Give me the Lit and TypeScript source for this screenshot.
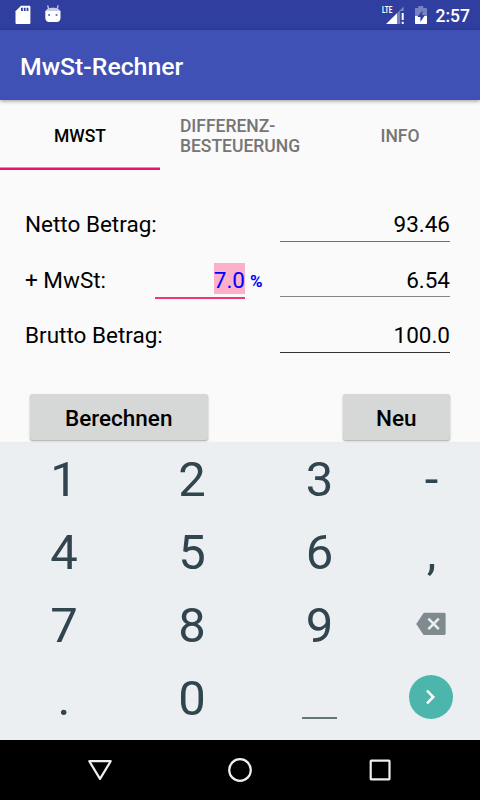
import { LitElement, html, css, svg } from "lit";
import { customElement } from "lit/decorators.js";

const sdCard = svg`<svg width="16" height="20" viewBox="0 0 16 20"><path fill="#fff" d="M6 .7h8.200c.8 0 1.200.5 1.200 1.200v15.900c0 .8-.4 1.200-1.200 1.200H1.700c-.8 0-1.200-.4-1.200-1.200V6.300z"/><path fill="#303f9f" d="M6 2.700h1.800v3.200H6zM8.800 2.700h1.800v3.200H8.800zM11.600 2.700h1.800v3.200h-1.800z"/></svg>`;

const robot = svg`<svg width="18" height="20" viewBox="0 0 18 20"><path d="M4.600 4 3.700.3M13.200 4 14.100.3" stroke="#c5cae9" stroke-width="1.300" fill="none"/><path fill="#c5cae9" d="M1.500 6.500C2 4 5 2.800 8.900 2.800S15.800 4 16.300 6.500z"/><path fill="#fff" d="M1.300 6h15.200v6.300c0 3.500-1.700 4.700-4.400 4.700H5.700c-2.700 0-4.400-1.200-4.400-4.700z"/><circle cx="5.100" cy="10" r="1.100" fill="#5c6bc0"/><circle cx="12.500" cy="10" r="1.100" fill="#5c6bc0"/></svg>`;

const signal = svg`<svg width="19" height="19" viewBox="0 0 19 19"><path fill="#7782c2" d="M17.700.5v4.500h-3.500v13H0z"/><path fill="#fff" d="M11 7.300V18H.2z"/><path fill="#fff" d="M15.700 7h2v7h-2zM15.700 15.800h2V18h-2z"/></svg>`;

const battery = svg`<svg width="14" height="20" viewBox="0 0 14 20"><path fill="#7782c2" d="M4.300 1h5v2H12c.6 0 1 .4 1 1v7.500H1V4c0-.6.4-1 1-1h2.300z"/><path fill="#fff" d="M1 11h12v7c0 .6-.4 1-1 1H2c-.6 0-1-.4-1-1z"/><path fill="#303f9f" d="M8.700 5.200 3.300 12h3.100v4.900L11 10H8z"/></svg>`;

const backspace = svg`<svg width="30" height="24" viewBox="0 0 30 24"><path fill="#808b90" d="M8.500.8h19.600c.9 0 1.500.6 1.500 1.500v19.300c0 .9-.6 1.500-1.500 1.500H8.500c-.6 0-1-.3-1.300-.7L.2 12l7-10.500c.3-.4.700-.7 1.300-.7z"/><path d="m12.400 6.700 10.400 10.400M22.800 6.700 12.400 17.100" stroke="#eceff1" stroke-width="2.500" fill="none"/></svg>`;

const chevron = svg`<svg width="12" height="16" viewBox="0 0 12 16"><path d="m2 1.700 6.300 6.300L2 14.300" stroke="#fff" stroke-width="2.500" fill="none"/></svg>`;

@customElement("app-root")
export class AppRoot extends LitElement {
  static styles = css`
    :host {
      display: flex;
      flex-direction: column;
      width: 480px;
      height: 800px;
      overflow: hidden;
      background: #fafafa;
      color: #000;
      font-family: Roboto, "Liberation Sans", sans-serif;
    }
    svg { display: block; flex: none; }
    .status {
      flex: none;
      display: flex;
      align-items: center;
      height: 30px;
      padding: 0 10px 0 14.500px;
      box-sizing: border-box;
      background: #303f9f;
      color: #fff;
    }
    .robot { margin-left: 13px; }
    .right { margin-left: auto; display: flex; align-items: center; }
    .signal { position: relative; padding-left: 4px; margin-right: 8.500px; }
    .lte {
      position: absolute;
      left: 0;
      top: -1px;
      font-size: 9.500px;
      line-height: 10px;
      font-weight: 700;
      transform: scaleX(0.68);
      transform-origin: left;
    }
    .clock { font-size: 17.500px; font-weight: 500; margin-left: 8px; line-height: 30px; padding-top: 1px; }
    .bar {
      flex: none;
      height: 70px;
      padding: 3px 20px 0;
      box-sizing: border-box;
      display: flex;
      align-items: center;
      background: #3f51b5;
      color: #fff;
      font-size: 24.800px;
      font-weight: 500;
      box-shadow: 0 1px 4px rgba(0, 0, 0, 0.4);
      z-index: 1;
    }
    .tabs {
      flex: none;
      display: grid;
      grid-template-columns: repeat(3, 160px);
      height: 70px;
      font-size: 17.500px;
      line-height: 20.500px;
      font-weight: 500;
      color: #757575;
    }
    .tab {
      display: flex;
      align-items: center;
      justify-content: center;
      box-sizing: border-box;
      padding-top: 2px;
    }
    .active { color: #000; box-shadow: inset 0 -2.500px #ee1168; }
    .form {
      flex: none;
      margin-top: 26px;
      height: 198px;
      padding: 0 30px 0 25px;
      font-size: 22.500px;
    }
    .row { display: flex; height: 56px; line-height: 56px; }
    .row.mid { height: 55px; }
    .label { width: 130px; white-space: nowrap; }
    .rate {
      width: 90px;
      height: 46px;
      box-sizing: border-box;
      display: flex;
      justify-content: flex-end;
      align-items: flex-end;
      padding-bottom: 3px;
      border-bottom: 2px solid #f2356f;
      color: #00f;
      height: 46.500px;
    }
    .selected { background: #fcb0c9; height: 31px; line-height: 34px; }
    .percent { width: 35px; padding-left: 5px; box-sizing: border-box; color: #00f; font-size: 17px; font-weight: 700; padding-top: 1px; }
    .value {
      width: 170px;
      height: 46px;
      box-sizing: border-box;
      margin-left: auto;
      text-align: right;
      border-bottom: 1px solid #6f6f6f;
    }
    .mid .value { height: 45px; border-bottom-color: #858585; }
    .last .value { border-bottom-color: #333; }
    .actions {
      flex: 1;
      min-height: 0;
      display: flex;
      justify-content: space-between;
      align-items: flex-start;
      padding: 0 30px;
    }
    .btn {
      height: 46px;
      border-radius: 2.500px;
      background: #d6d8d7;
      font-size: 22.500px;
      font-weight: 500;
      line-height: 48px;
      text-align: center;
      box-shadow: 0 1px 2px rgba(0, 0, 0, 0.35);
    }
    .calc { width: 177.500px; }
    .reset { width: 107.500px; }
    .keys {
      flex: none;
      height: 297px;
      padding-bottom: 4px;
      box-sizing: border-box;
      display: grid;
      grid-template-columns: 128px 128px 127px 97px;
      grid-auto-rows: 73px;
      background: #eceff1;
      box-shadow: 0 -1px 1px rgba(0, 0, 0, 0.05);
      color: #31454e;
      font-size: 49px;
      z-index: 1;
    }
    .key { display: flex; align-items: center; justify-content: center; line-height: 73px; }
    .icon { padding: 0 1px 3px 0; }
    .space { width: 35px; height: 2px; background: #68767c; margin: 38px 1px 0 0; }
    .next {
      width: 44.500px;
      height: 44.500px;
      border-radius: 50%;
      background: #4db6ac;
      display: flex;
      align-items: center;
      justify-content: center;
    }
    .nav { flex: none; z-index: 1; height: 60px; background: #000; }
  `;

  render() {
    return html`
      <div class="status">
        ${sdCard}<span class="robot">${robot}</span>
        <div class="right">
          <div class="signal"><span class="lte">LTE</span>${signal}</div>
          ${battery}<span class="clock">2:57</span>
        </div>
      </div>
      <div class="bar">MwSt-Rechner</div>
      <div class="tabs">
        <div class="tab active">MWST</div>
        <div class="tab"><span>DIFFERENZ-<br />BESTEUERUNG</span></div>
        <div class="tab">INFO</div>
      </div>
      <div class="form">
        <div class="row"><span class="label">Netto Betrag:</span><span class="value">93.46</span></div>
        <div class="row mid">
          <span class="label">+ MwSt:</span>
          <span class="rate"><span class="selected">7.0</span></span>
          <span class="percent">%</span>
          <span class="value">6.54</span>
        </div>
        <div class="row last"><span class="label">Brutto Betrag:</span><span class="value">100.0</span></div>
      </div>
      <div class="actions">
        <div class="btn calc">Berechnen</div>
        <div class="btn reset">Neu</div>
      </div>
      <div class="keys">
        ${["1", "2", "3", "-", "4", "5", "6", ",", "7", "8", "9"].map((k) => html`<div class="key">${k}</div>`)}
        <div class="key icon">${backspace}</div>
        <div class="key">.</div>
        <div class="key">0</div>
        <div class="key"><span class="space"></span></div>
        <div class="key icon"><span class="next">${chevron}</span></div>
      </div>
      <svg class="nav" width="480" height="60" viewBox="0 0 480 60" fill="none" stroke="#eee" stroke-width="2.200" stroke-linejoin="round">
        <path d="M89.300 21.200h21.400L100 38.900z" />
        <circle cx="240" cy="30" r="10.800" />
        <rect x="370.700" y="20.700" width="18.800" height="18.600" rx=".5" />
      </svg>
    `;
  }
}
